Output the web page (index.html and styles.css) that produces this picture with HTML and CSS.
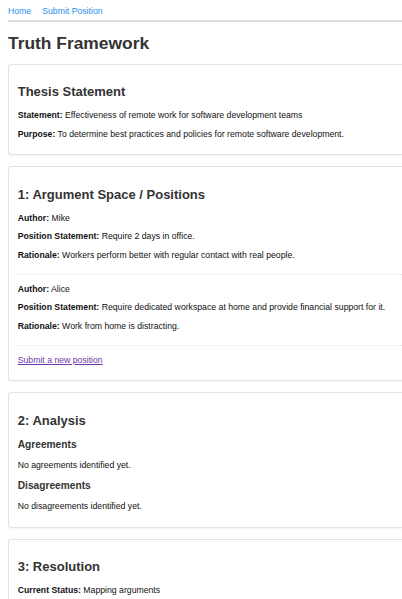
FILE: index.html
```html
<!DOCTYPE html>
<html lang="en">
<head>
<meta charset="utf-8">
<title>Truth Framework</title>
<link rel="stylesheet" href="styles.css">
</head>
<body>
<div class="page">
  <nav class="nav">
    <a href="#" class="nav-link">Home</a>
    <a href="#" class="nav-link">Submit Position</a>
  </nav>
  <h1 class="title">Truth Framework</h1>

  <section class="card">
    <h2 class="card-title">Thesis Statement</h2>
    <p class="field"><strong>Statement:</strong> Effectiveness of remote work for software development teams</p>
    <p class="field"><strong>Purpose:</strong> To determine best practices and policies for remote software development.</p>
  </section>

  <section class="card">
    <h2 class="card-title">1: Argument Space / Positions</h2>
    <div class="position">
      <p class="field"><strong>Author:</strong> Mike</p>
      <p class="field"><strong>Position Statement:</strong> Require 2 days in office.</p>
      <p class="field"><strong>Rationale:</strong> Workers perform better with regular contact with real people.</p>
    </div>
    <div class="position">
      <p class="field"><strong>Author:</strong> Alice</p>
      <p class="field"><strong>Position Statement:</strong> Require dedicated workspace at home and provide financial support for it.</p>
      <p class="field"><strong>Rationale:</strong> Work from home is distracting.</p>
    </div>
    <p class="field"><a href="#" class="visited-link">Submit a new position</a></p>
  </section>

  <section class="card">
    <h2 class="card-title">2: Analysis</h2>
    <h3 class="sub-title">Agreements</h3>
    <p class="field">No agreements identified yet.</p>
    <h3 class="sub-title">Disagreements</h3>
    <p class="field">No disagreements identified yet.</p>
  </section>

  <section class="card">
    <h2 class="card-title">3: Resolution</h2>
    <p class="field"><strong>Current Status:</strong> Mapping arguments</p>
  </section>
</div>
</body>
</html>
```

FILE: styles.css
```css
html, body {
  margin: 0;
  padding: 0;
  background: #fff;
}

body {
  font-family: "Liberation Sans", Arial, sans-serif;
  font-size: 8.7px;
  color: #222;
  overflow: hidden;
}

.page {
  padding: 6px 0 0 8px;
}

.nav {
  display: flex;
  gap: 11px;
  padding-bottom: 4px;
  border-bottom: 2px solid #dcdcdc;
}

.nav-link {
  color: #2b8ef0;
  text-decoration: none;
  font-size: 8.7px;
  line-height: 10px;
}

.title {
  font-size: 17.4px;
  font-weight: bold;
  color: #333;
  margin: 11px 0 11px;
  line-height: 20px;
}

.card {
  border: 1px solid #e3e3e3;
  border-right: 0;
  border-radius: 3px 0 0 3px;
  padding: 8.7px 0 6.7px 8.7px;
  margin: 0 0 11px 0;
  box-shadow: 0 1px 2px rgba(0,0,0,0.04);
}

.card-title {
  font-size: 13px;
  font-weight: bold;
  color: #333;
  margin: 10.8px 0;
  line-height: 15px;
}

.sub-title {
  font-size: 10.2px;
  font-weight: bold;
  color: #333;
  margin: 10.2px 0;
  line-height: 11px;
}

.field {
  margin: 8.7px 0;
  line-height: 10px;
  color: #111;
}

.field strong {
  font-weight: bold;
}

.position {
  padding-bottom: 5.4px;
  border-bottom: 1px dotted #e6e6e6;
}

.visited-link {
  color: #6a3aa6;
  text-decoration: underline;
}
```
